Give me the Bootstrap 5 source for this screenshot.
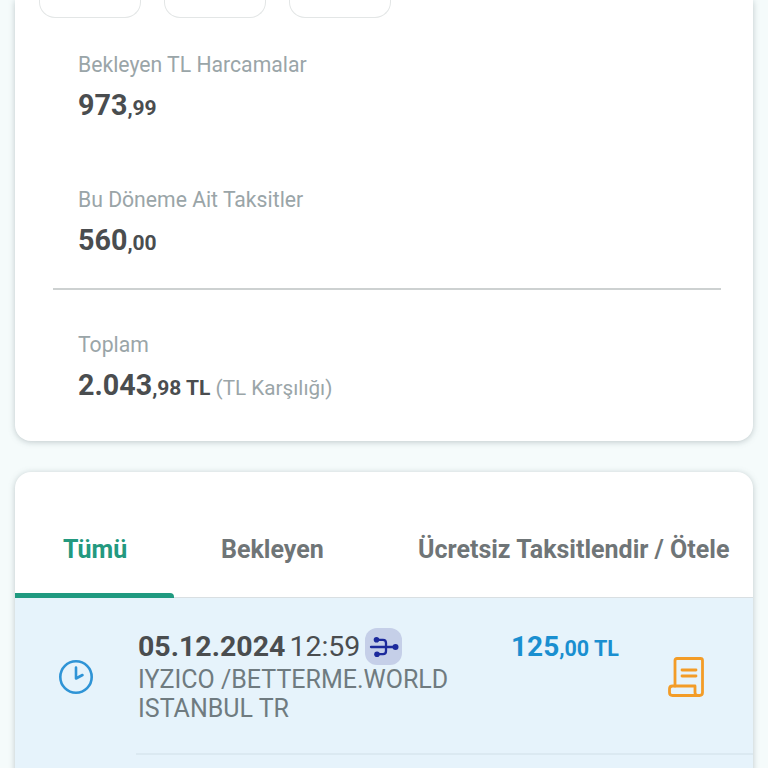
<!DOCTYPE html>
<html lang="tr">
<head>
  <meta charset="UTF-8">
  <meta name="viewport" content="width=device-width, initial-scale=1.0">
  <title>Kart Hareketleri</title>
  <link href="https://cdn.jsdelivr.net/npm/bootstrap@5.3.3/dist/css/bootstrap.min.css" rel="stylesheet">
  <style>
    html, body { height: 768px; overflow: hidden; }
    body {
      background-color: #f5fbfb;
      font-family: Roboto, "Liberation Sans", sans-serif;
      color: #4a4d4f;
      padding: 0 15px;
    }
    .panel-box {
      background: #fff;
      border: 0;
      border-radius: 16px;
      box-shadow: 0 1px 6px rgba(90, 110, 115, .35);
    }
    .panel-ozet {
      height: 441px;
      border-top-left-radius: 0;
      border-top-right-radius: 0;
      padding: 0 32px 0 38px;
    }
    .kutu-row { gap: 23px; margin-left: -14px; }
    .kutu {
      width: 102px;
      height: 18px;
      border: 1px solid #e3e6e6;
      border-top: 0;
      border-radius: 0 0 16px 16px;
    }
    .ozet-item { padding-left: 25px; }
    .ozet-item-1 { padding-top: 33px; }
    .ozet-item-2 { padding-top: 61px; }
    .ozet-item-3 { padding-top: 41px; }
    .ozet-label { font-size: 21.2px; line-height: 28px; color: #9aa5a8; }
    .tutar { font-size: 28.7px; line-height: 34px; font-weight: 700; color: #4a4d4f; margin-top: 9px; }
    .tutar small { font-size: 21px; font-weight: 700; }
    .tutar .not { font-size: 20.7px; font-weight: 400; color: #9aa5a8; margin-left: -2px; }
    .ayrac { height: 2px; background: #cdd1d1; margin-top: 28px; }
    .panel-liste { height: 400px; margin-top: 31px; overflow: hidden; }
    .sekme-row { height: 126px; border-bottom: 1px solid #d9dfe2; }
    .sekme {
      font-size: 25px;
      line-height: 30px;
      font-weight: 700;
      color: #6f7577;
      padding-top: 63px;
      white-space: nowrap;
    }
    .sekme-aktif { position: relative; width: 159px; padding-left: 48px; color: #23997f; }
    .sekme-aktif::after {
      content: "";
      position: absolute;
      left: 0;
      right: 0;
      bottom: -1px;
      height: 5px;
      background: #1f9a80;
      border-top-right-radius: 4px;
    }
    .sekme-2 { width: 244px; padding-left: 47px; }
    .hareket { background: #e6f3fb; height: 200px; }
    .hareket-ikon { width: 121px; padding: 61px 0 0 43px; }
    .hareket-ana { padding-top: 30px; height: 157px; border-bottom: 2px solid #dbe9f1; }
    .hareket-bilgi { width: 375px; padding-left: 2px; }
    .tarih { font-size: 28.5px; line-height: 37px; color: #4a4d4f; word-spacing: -3px; }
    .usb-rozet {
      width: 37px;
      height: 37px;
      border-radius: 12px;
      background: #c5cfe8;
      margin-left: 5px;
    }
    .aciklama { font-size: 25px; line-height: 29px; color: #6f7b80; }
    .hareket-tutar { width: 157px; font-size: 28px; line-height: 37px; font-weight: 700; color: #1a8fd0; }
    .hareket-tutar small { font-size: 21.5px; font-weight: 700; }
    .dekont { padding-top: 29px; }
  </style>
</head>
<body>
  <div class="panel-box panel-ozet">
    <div class="d-flex kutu-row">
      <div class="kutu"></div>
      <div class="kutu"></div>
      <div class="kutu"></div>
    </div>

    <div class="ozet-item ozet-item-1">
      <div class="ozet-label">Bekleyen TL Harcamalar</div>
      <div class="tutar">973<small>,99</small></div>
    </div>
    <div class="ozet-item ozet-item-2">
      <div class="ozet-label">Bu Döneme Ait Taksitler</div>
      <div class="tutar">560<small>,00</small></div>
    </div>
    <div class="ayrac"></div>
    <div class="ozet-item ozet-item-3">
      <div class="ozet-label">Toplam</div>
      <div class="tutar">2.043<small>,98 TL</small> <span class="not">(TL Karşılığı)</span></div>
    </div>
  </div>

  <div class="panel-box panel-liste">
    <div class="d-flex sekme-row">
      <div class="sekme sekme-aktif">Tümü</div>
      <div class="sekme sekme-2">Bekleyen</div>
      <div class="sekme">Ücretsiz Taksitlendir / Ötele</div>
    </div>
    <div class="hareket d-flex">
      <div class="hareket-ikon">
        <svg width="36" height="36" viewBox="0 0 36 36" fill="none" stroke="#2f94d6" stroke-width="2.6" stroke-linecap="round" stroke-linejoin="round">
          <circle cx="18" cy="18" r="15.7"/>
          <path d="M18 8.5V19.5L24.5 16"/>
        </svg>
      </div>
      <div class="hareket-ana flex-grow-1 d-flex">
        <div class="hareket-bilgi">
          <div class="tarih d-flex align-items-center"><span><b>05.12.2024</b> 12:59</span>
            <span class="usb-rozet d-flex align-items-center justify-content-center">
              <svg width="30" height="20" viewBox="0 0 30 20" fill="none" stroke="#1c2a9c" stroke-width="2.3" stroke-linecap="round" stroke-linejoin="round">
                <circle cx="7.5" cy="2.8" r="2.8" fill="#1c2a9c" stroke="none"/>
                <circle cx="8" cy="17.2" r="2.8" fill="#1c2a9c" stroke="none"/>
                <circle cx="26.5" cy="10" r="3" fill="#1c2a9c" stroke="none"/>
                <path d="M2 10H26M7.5 2.8H14C16 2.8 17 4 17 6V14C17 16 16 17.2 14 17.2H8"/>
              </svg>
            </span>
          </div>
          <div class="aciklama">IYZICO /BETTERME.WORLD<br>ISTANBUL TR</div>
        </div>
        <div class="hareket-tutar">125<small>,00 TL</small></div>
        <div class="dekont">
          <svg width="36" height="40" viewBox="0 0 36 40" fill="none" stroke="#f39c27" stroke-width="2.8" stroke-linecap="round" stroke-linejoin="round">
            <path d="M7 29V3.5C7 2.3 7.8 1.5 9 1.5H32.5C33.8 1.5 34.5 2.3 34.5 3.5V35.5C34.5 37.2 33.2 38.5 31.5 38.5H27"/>
            <path d="M4.5 29H27V35.5C27 37.2 28 38.5 30 38.5H4.5C2.8 38.5 1.5 37.2 1.5 35.5V32C1.5 30.3 2.8 29 4.5 29Z"/>
            <path d="M14 13H28M14 19H28"/>
          </svg>
        </div>
      </div>
    </div>
  </div>

  <script src="https://cdn.jsdelivr.net/npm/bootstrap@5.3.3/dist/js/bootstrap.bundle.min.js"></script>
</body>
</html>
